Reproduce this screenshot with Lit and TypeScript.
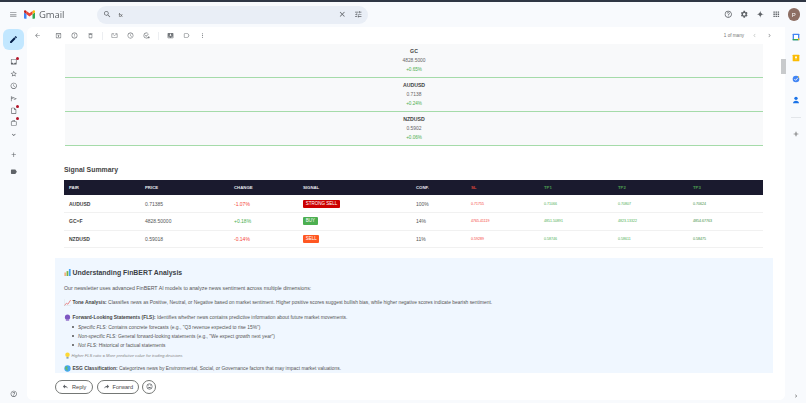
import { LitElement, html, css } from "lit";
import { customElement } from "lit/decorators.js";

const P: Record<string, string> = {
  menu: "M3 18h18v-2H3v2zm0-5h18v-2H3v2zm0-7v2h18V6H3z",
  search: "M15.5 14h-.79l-.28-.27C15.41 12.59 16 11.11 16 9.5 16 5.91 13.09 3 9.5 3S3 5.91 3 9.5 5.91 16 9.5 16c1.61 0 3.09-.59 4.23-1.57l.27.28v.79l5 4.99L20.49 19l-4.99-5zm-6 0C7.01 14 5 11.99 5 9.5S7.01 5 9.5 5 14 7.01 14 9.5 11.99 14 9.5 14z",
  close: "M19 6.41L17.59 5 12 10.59 6.41 5 5 6.41 10.59 12 5 17.59 6.41 19 12 13.41 17.59 19 19 17.59 13.41 12z",
  tune: "M3 17v2h6v-2H3zM3 5v2h10V5H3zm10 16v-2h8v-2h-8v-2h-2v6h2zM7 9v2H3v2h4v2h2V9H7zm14 4v-2H11v2h10zm-6-4h2V7h4V5h-4V3h-2v6z",
  help: "M11 18h2v-2h-2v2zm1-16C6.48 2 2 6.48 2 12s4.48 10 10 10 10-4.48 10-10S17.52 2 12 2zm0 18c-4.41 0-8-3.59-8-8s3.59-8 8-8 8 3.59 8 8-3.59 8-8 8zm0-14c-2.21 0-4 1.79-4 4h2c0-1.1.9-2 2-2s2 .9 2 2c0 2-3 1.75-3 5h2c0-2.25 3-2.5 3-5 0-2.21-1.79-4-4-4z",
  gear: "M19.14 12.94c.04-.3.06-.61.06-.94 0-.32-.02-.64-.07-.94l2.03-1.58c.18-.14.23-.41.12-.61l-1.92-3.32c-.12-.22-.37-.29-.59-.22l-2.39.96c-.5-.38-1.03-.7-1.62-.94l-.36-2.54c-.04-.24-.24-.41-.48-.41h-3.84c-.24 0-.43.17-.47.41l-.36 2.54c-.59.24-1.13.57-1.62.94l-2.39-.96c-.22-.08-.47 0-.59.22L2.74 8.87c-.12.21-.08.47.12.61l2.03 1.58c-.05.3-.09.63-.09.94s.02.64.07.94l-2.03 1.58c-.18.14-.23.41-.12.61l1.92 3.32c.12.22.37.29.59.22l2.39-.96c.5.38 1.03.7 1.62.94l.36 2.54c.05.24.24.41.48.41h3.84c.24 0 .44-.17.47-.41l.36-2.54c.59-.24 1.13-.56 1.62-.94l2.39.96c.22.08.47 0 .59-.22l1.92-3.32c.12-.22.07-.47-.12-.61l-2.01-1.58zM12 15.6c-1.98 0-3.6-1.62-3.6-3.6s1.62-3.6 3.6-3.6 3.6 1.62 3.6 3.6-1.62 3.6-3.6 3.6z",
  spark: "M12 2C12.6 8 16 11.4 22 12 16 12.6 12.6 16 12 22 11.4 16 8 12.6 2 12 8 11.4 11.4 8 12 2z",
  apps: "M4 4h4v4H4zM10 4h4v4h-4zM16 4h4v4h-4zM4 10h4v4H4zM10 10h4v4h-4zM16 10h4v4h-4zM4 16h4v4H4zM10 16h4v4h-4zM16 16h4v4h-4z",
  back: "M20 11H7.83l5.59-5.59L12 4l-8 8 8 8 1.41-1.41L7.83 13H20v-2z",
  archive: "M20.54 5.23l-1.39-1.68C18.88 3.21 18.47 3 18 3H6c-.47 0-.88.21-1.16.55L3.46 5.23C3.17 5.57 3 6.02 3 6.5V19c0 1.1.9 2 2 2h14c1.1 0 2-.9 2-2V6.5c0-.48-.17-.93-.46-1.27zM6.24 5h11.52l.81.97H5.44l.8-.97zM5 19V8h14v11H5zm5.5-2h3v-3H16l-4-4-4 4h2.5z",
  report: "M12 2a10 10 0 100 20 10 10 0 000-20zm0 18a8 8 0 110-16 8 8 0 010 16zM11 7h2v6h-2zm0 8h2v2h-2z",
  del: "M6 19c0 1.1.9 2 2 2h8c1.1 0 2-.9 2-2V7H6v12zM8 9h8v10H8V9zm7.500-5l-1-1h-5l-1 1H5v2h14V4h-3.500z",
  mail: "M20 4h-5v2h5v12H4V6h7V4H4c-1.100 0-2 .9-2 2v12c0 1.100.9 2 2 2h16c1.100 0 2-.9 2-2V6c0-1.100-.9-2-2-2zM4 8l8 5 8-5V6l-8 5-4-2.500z",
  clock: "M11.99 2C6.47 2 2 6.48 2 12s4.47 10 9.99 10C17.52 22 22 17.52 22 12S17.52 2 11.99 2zM12 20c-4.42 0-8-3.58-8-8s3.58-8 8-8 8 3.58 8 8-3.58 8-8 8zm.5-13H11v6l5.25 3.15.75-1.23-4.5-2.67z",
  task: "M12 2a10 10 0 109.500 13h-2.100A8 8 0 1112 4c1.700 0 3.300.5 4.600 1.500L18 4a10 10 0 00-6-2zM8.400 10.600L7 12l4 4 9-9-1.400-1.400L11 13.200zM19 14v3h-3v2h3v3h2v-3h3v-2h-3v-3z",
  move: "M20 3H4c-1.100 0-2 .9-2 2v14c0 1.100.9 2 2 2h16c1.100 0 2-.9 2-2V5c0-1.100-.9-2-2-2zm0 16H4v-3h4c0 1.660 1.800 3 4 3s4-1.340 4-3h4v3zM12 14l-4-4h2.500V6h3v4H16z",
  label: "M17.63 5.84C17.27 5.33 16.67 5 16 5L5 5.01C3.9 5.01 3 5.9 3 7v10c0 1.1.9 1.99 2 1.99L16 19c.67 0 1.27-.33 1.63-.84L22 12l-4.37-6.16zM16 17H5V7h11l3.55 5L16 17z",
  more: "M12 8c1.1 0 2-.9 2-2s-.9-2-2-2-2 .9-2 2 .9 2 2 2zm0 2c-1.1 0-2 .9-2 2s.9 2 2 2 2-.9 2-2-.9-2-2-2zm0 6c-1.1 0-2 .9-2 2s.9 2 2 2 2-.9 2-2-.9-2-2-2z",
  left: "M15.41 7.41L14 6l-6 6 6 6 1.41-1.41L10.83 12z",
  right: "M10 6L8.59 7.41 13.17 12l-4.58 4.59L10 18l6-6z",
  down: "M16.59 8.59L12 13.17 7.41 8.59 6 10l6 6 6-6z",
  inbox: "M19 3H4.99c-1.11 0-1.98.89-1.98 2L3 19c0 1.1.88 2 1.99 2H19c1.1 0 2-.9 2-2V5c0-1.11-.9-2-2-2zm0 12h-4c0 1.66-1.35 3-3 3s-3-1.34-3-3H4.99V5H19v10z",
  star: "M22 9.24l-7.19-.62L12 2 9.19 8.63 2 9.24l5.46 4.73L5.82 21 12 17.27 18.18 21l-1.63-7.03L22 9.24zM12 15.4l-3.76 2.27 1-4.28-3.32-2.88 4.38-.38L12 6.1l1.71 4.04 4.38.38-3.32 2.88 1 4.28L12 15.4z",
  send: "M3 4v16h2v-7h6l-1-2H5V7.200L18 12l-6 2.200v2.100L22 12 3 4z",
  draft: "M14 2H6c-1.1 0-2 .9-2 2v16c0 1.1.9 2 2 2h12c1.1 0 2-.9 2-2V8l-6-6zM6 20V4h7v5h5v11H6z",
  bag: "M19 7h-3V5c0-1.100-.9-2-2-2h-4c-1.100 0-2 .9-2 2v2H5c-1.100 0-2 .9-2 2v10c0 1.100.9 2 2 2h14c1.100 0 2-.9 2-2V9c0-1.100-.9-2-2-2zM10 5h4v2h-4V5zm9 14H5V9h14v10z",
  plus: "M19 13h-6v6h-2v-6H5v-2h6V5h2v6h6v2z",
  labelFill: "M17.63 5.84C17.27 5.33 16.67 5 16 5L5 5.01C3.9 5.01 3 5.9 3 7v10c0 1.1.9 1.99 2 1.99L16 19c.67 0 1.27-.33 1.63-.84L22 12l-4.37-6.16z",
  pencil: "M3 17.25V21h3.75L17.81 9.94l-3.75-3.75L3 17.25zM20.71 7.04a1 1 0 000-1.41l-2.34-2.34a1 1 0 00-1.41 0l-1.83 1.83 3.75 3.75 1.83-1.83z",
  reply: "M10 9V5l-7 7 7 7v-4.100c5 0 8.500 1.600 11 5.100-1-5-4-10-11-11z",
  forward: "M14 9V5l7 7-7 7v-4.100c-5 0-8.500 1.600-11 5.100 1-5 4-10 11-11z",
  smile: "M12 2a10 10 0 100 20 10 10 0 000-20zm0 18a8 8 0 110-16 8 8 0 010 16zM8.500 11a1.500 1.500 0 100-3 1.500 1.500 0 000 3zm7 0a1.500 1.500 0 100-3 1.500 1.500 0 000 3zM12 17.500c2.300 0 4.300-1.500 5.100-3.500H6.900c.8 2 2.800 3.500 5.100 3.500z",
};

const icon = (name: string, cls = "") => html`<svg class="ic ${cls}" viewBox="0 0 24 24" aria-hidden="true"><path d=${P[name]}></path></svg>`;

const quotes = [
  { s: "GC", p: "4828.5000", c: "+0.65%" },
  { s: "AUDUSD", p: "0.7138", c: "+0.24%" },
  { s: "NZDUSD", p: "0.5902", c: "+0.06%" },
];
const rows = [
  { pair: "AUDUSD", price: "0.71385", ch: "-1.07%", up: false, sig: "STRONG SELL", k: "ss", conf: "100%", sl: "0.71755", t1: "0.71066", t2: "0.70807", t3: "0.70624" },
  { pair: "GC=F", price: "4828.50000", ch: "+0.18%", up: true, sig: "BUY", k: "buy", conf: "14%", sl: "4765.41119", t1: "4851.50891", t2: "4823.13322", t3: "4854.67763" },
  { pair: "NZDUSD", price: "0.59018", ch: "-0.14%", up: false, sig: "SELL", k: "sell", conf: "11%", sl: "0.59289", t1: "0.58746", t2: "0.58611", t3: "0.58475" },
];

@customElement("app-root")
export class AppRoot extends LitElement {
  static styles = css`
    :host { display: block; width: 806px; height: 403px; overflow: hidden; background: #f8fafd; font-family: "Liberation Sans", Arial, sans-serif; color: #444; }
    * { box-sizing: border-box; }
    .shell { height: 403px; display: flex; flex-direction: column; border-top: 2px solid #2f3644; filter: blur(0.3px); }
    .ic { width: 8px; height: 8px; fill: #5f6368; display: block; flex: none; }
    .cell { display: flex; align-items: center; justify-content: center; flex: none; width: 16px; height: 16px; position: relative; }

    .top { height: 25px; flex: none; display: flex; align-items: center; padding-left: 5px; }
    .top .cell .ic { width: 8.5px; height: 8.5px; }
    .logo { margin-left: 3px; display: flex; align-items: center; gap: 4px; width: 73px; flex: none; }
    .logo svg { width: 11px; height: 9px; display: block; }
    .logo span { font: 9.5px "Open Sans", sans-serif; color: #5f6368; letter-spacing: -0.1px; }
    .search { width: 271px; height: 18px; flex: none; border-radius: 9px; background: #e9eef6; display: flex; align-items: center; padding: 0 2px 0 2.5px; }
    .search .q { flex: 1; margin-left: 3px; font-size: 5.4px; color: #444; }
    .topright { margin-left: auto; display: flex; align-items: center; padding-right: 6px; }
    .avatar { width: 12.5px; height: 12.5px; border-radius: 50%; background: #8d6e63; color: #fff; font-size: 6px; display: flex; align-items: center; justify-content: center; margin-left: 3px; }

    .body { flex: 1; min-height: 0; display: flex; }
    .rail { width: 27px; flex: none; display: flex; flex-direction: column; align-items: center; padding-top: 2px; }
    .compose { width: 21px; height: 21px; border-radius: 6px; background: #c2e7ff; display: flex; align-items: center; justify-content: center; margin-bottom: 6px; }
    .compose .ic { fill: #041e49; width: 9px; height: 9px; }
    .rail .cell { height: 12.1px; }
    .rail .cell .ic { width: 7.5px; height: 7.5px; }
    .dot { position: absolute; top: 0.5px; left: 10.5px; width: 3px; height: 3px; border-radius: 50%; background: #b3152a; }
    .rail .spacer { height: 8px; }
    .rail .gapbot { margin-top: 5px; }
    .rail .helpb { margin-top: auto; margin-bottom: 3px; }

    .main { width: 758px; flex: none; background: #fff; border-radius: 6px 0 6px 6px; display: flex; flex-direction: column; position: relative; min-height: 0; margin-bottom: 3px; }
    .tool { height: 17px; flex: none; display: flex; align-items: center; padding-left: 2px; }
    .tool .ic { width: 7px; height: 7px; fill: #74787c; }
    .sep { width: 1px; height: 8px; background: #eceef1; flex: none; margin: 0 3.5px; }
    .b5 { margin-left: 5px; }
    .pager { margin-left: auto; display: flex; align-items: center; font-size: 4.6px; color: #747775; padding-right: 8px; }
    .pager span { margin-right: 3px; }
    .tool .pager .ic { fill: #8a8d90; }
    .pager .cell { width: 15px; }
    .tool .pager .ic.dim { fill: #c4c7c5; }

    .scroll { flex: 1; min-height: 0; overflow: hidden; padding: 0 12px 0 28px; }
    .quote { margin: 0 10px; height: 34px; background: #f8f9fa; border-bottom: 1px solid #a5dba9; text-align: center; display: flex; flex-direction: column; align-items: center; padding-top: 3px; }
    .quote b { font-size: 5.2px; line-height: 9px; color: #444; }
    .quote i { font-style: normal; font-size: 4.9px; line-height: 10px; color: #666; }
    .quote em { font-style: normal; font-size: 4.6px; line-height: 8px; color: #4caf50; }
    h3 { margin: 19px 0 0 9px; font-size: 6.9px; line-height: 10px; color: #444; font-weight: 700; }
    table { margin: 5px 10px 0 9px; width: 699px; border-collapse: collapse; table-layout: fixed; }
    th { background: #1a1a2e; color: #e8e8ee; font-size: 4.3px; font-weight: 700; text-align: left; height: 15px; padding: 0 0 0 5px; }
    th.r { color: #d9453a; }
    th.g { color: #4a9c50; }
    td { height: 17.5px; font-size: 5px; color: #555; padding: 0 0 0 5px; border-bottom: 1px solid #f1f1f1; }
    td.pair { font-weight: 700; color: #444; }
    td.up { color: #4caf50; }
    td.dn { color: #f44336; }
    td.lv { font-size: 3.6px; }
    td.r { color: #f44336; }
    td.g { color: #4caf50; }
    td.g3 { color: #388e3c; }
    .tag { display: inline-block; font-size: 4.5px; line-height: 8px; padding: 0 2.7px; border-radius: 1px; color: #fff; vertical-align: middle; }
    .tag.ss { background: #cc0000; }
    .tag.buy { background: #4caf50; }
    .tag.sell { background: #ff5722; }

    .info { margin-top: 9.5px; background: #f0f7ff; padding: 10px 9px 24px 9px; color: #555; font-size: 4.9px; }
    .info h2 { margin: 0; font-size: 6.9px; line-height: 10px; font-weight: 700; color: #3b3f46; display: flex; align-items: center; }
    .em { width: 7px; height: 7px; flex: none; display: inline-block; vertical-align: top; margin-right: 1.5px; }
    .info p { margin: 0; line-height: 7px; }
    .info .intro { margin-top: 7px; font-size: 5.25px; }
    .info .p2 { margin-top: 7.5px; }
    .info .esg { margin-top: 6.5px; }
    .info b { color: #444; }
    .info ul { margin: 2px 0 0 0; padding: 0 0 0 14px; line-height: 9.1px; list-style: none; }
    .info li { position: relative; }
    .info li::before { content: ""; position: absolute; left: -6px; top: 3.6px; width: 1.8px; height: 1.8px; border-radius: 50%; background: #555; }
    .info .note { margin-top: 2px; font-size: 4.1px; font-style: italic; color: #888; line-height: 7px; }
    .note .em { margin-right: 0.5px; }

    .replybar { height: 27px; flex: none; background: #fff; border-radius: 0 0 6px 6px; display: flex; align-items: center; padding: 0 0 0 28px; gap: 4px; }
    .btn { height: 14px; border: 1px solid #747775; border-radius: 7px; display: flex; align-items: center; font-size: 5.6px; color: #444; gap: 3px; padding-left: 6px; }
    .btn .ic { width: 7px; height: 7px; }
    .btn.re { width: 38px; }
    .btn.fw { width: 42px; padding-left: 5px; gap: 2.5px; }
    .btn.sm { width: 14px; padding: 0; justify-content: center; border-radius: 50%; margin-left: -1px; }
    .thumb { position: absolute; left: 754px; top: 32px; width: 4.5px; height: 15px; background: #c8cacc; }

    .side { flex: 1; display: flex; flex-direction: column; align-items: center; padding-top: 6px; }
    .side svg.a { width: 8px; height: 8px; display: block; margin-bottom: 13px; }
    .side hr { width: 10px; border: 0; border-top: 1px solid #e3e6ea; margin: 0 0 12px; }
    .side .ic { width: 8px; height: 8px; fill: #444; }
    .side .ic.tail { margin-top: auto; margin-bottom: 4px; width: 6px; height: 6px; }
  `;

  render() {
    return html`<div class="shell">
      <header class="top">
        <div class="cell">${icon("menu")}</div>
        <div class="logo">
          <svg viewBox="0 0 22 17" aria-hidden="true">
            <path d="M1.500 17H5V8L0 4v11.500C0 16.300.7 17 1.500 17z" fill="#4285f4"></path>
            <path d="M17 17h3.500c.8 0 1.500-.7 1.500-1.500V4l-5 4z" fill="#34a853"></path>
            <path d="M17 1.500V8l5-4V2.200C22 .3 19.900-.6 18.500.5z" fill="#fbbc04"></path>
            <path d="M5 8V1.500l6 4.500 6-4.500V8l-6 4.500z" fill="#ea4335"></path>
            <path d="M0 2.200V4l5 4V1.500L3.500.5C2.100-.6 0 .3 0 2.200z" fill="#c5221f"></path>
          </svg>
          <span>Gmail</span>
        </div>
        <div class="search">
          <div class="cell">${icon("search")}</div>
          <div class="q">fx</div>
          <div class="cell">${icon("close")}</div>
          <div class="cell">${icon("tune")}</div>
        </div>
        <div class="topright">
          <div class="cell">${icon("help")}</div>
          <div class="cell">${icon("gear")}</div>
          <div class="cell">${icon("spark")}</div>
          <div class="cell">${icon("apps")}</div>
          <div class="avatar">P</div>
        </div>
      </header>
      <div class="body">
        <nav class="rail">
          <div class="compose">${icon("pencil")}</div>
          <div class="cell">${icon("inbox")}<span class="dot"></span></div>
          <div class="cell">${icon("star")}</div>
          <div class="cell">${icon("clock")}</div>
          <div class="cell">${icon("send")}</div>
          <div class="cell">${icon("draft")}<span class="dot"></span></div>
          <div class="cell">${icon("bag")}<span class="dot"></span></div>
          <div class="cell">${icon("down")}</div>
          <div class="spacer"></div>
          <div class="cell">${icon("plus")}</div>
          <div class="cell gapbot">${icon("labelFill")}</div>
          <div class="cell helpb">${icon("help")}</div>
        </nav>
        <main class="main">
          <div class="tool">
            <div class="cell">${icon("back")}</div>
            <div class="cell b5">${icon("archive")}</div>
            <div class="cell">${icon("report")}</div>
            <div class="cell">${icon("del")}</div>
            <div class="sep"></div>
            <div class="cell">${icon("mail")}</div>
            <div class="cell">${icon("clock")}</div>
            <div class="cell">${icon("task")}</div>
            <div class="sep"></div>
            <div class="cell">${icon("move")}</div>
            <div class="cell">${icon("label")}</div>
            <div class="cell">${icon("more")}</div>
            <div class="pager">
              <span>1 of many</span>
              <div class="cell">${icon("left", "dim")}</div>
              <div class="cell">${icon("right")}</div>
            </div>
          </div>
          <div class="scroll">
            ${quotes.map((q) => html`<div class="quote"><b>${q.s}</b><i>${q.p}</i><em>${q.c}</em></div>`)}
            <h3>Signal Summary</h3>
            <table>
              <colgroup>
                ${[76, 89, 69, 113, 55, 73, 74, 75, 75].map((w) => html`<col style="width:${w}px" />`)}
              </colgroup>
              <thead>
                <tr>
                  <th>PAIR</th><th>PRICE</th><th>CHANGE</th><th>SIGNAL</th><th>CONF.</th>
                  <th class="r">SL</th><th class="g">TP1</th><th class="g">TP2</th><th class="g">TP3</th>
                </tr>
              </thead>
              <tbody>
                ${rows.map((r) => html`<tr>
                  <td class="pair">${r.pair}</td>
                  <td>${r.price}</td>
                  <td class=${r.up ? "up" : "dn"}>${r.ch}</td>
                  <td><span class="tag ${r.k}">${r.sig}</span></td>
                  <td>${r.conf}</td>
                  <td class="lv r">${r.sl}</td>
                  <td class="lv g">${r.t1}</td>
                  <td class="lv g">${r.t2}</td>
                  <td class="lv g3">${r.t3}</td>
                </tr>`)}
              </tbody>
            </table>
            <section class="info">
              <h2>
                <svg class="em" viewBox="0 0 10 10" aria-hidden="true"><rect x="0.500" y="5" width="2.500" height="5" fill="#f4b183"></rect><rect x="3.700" y="3" width="2.500" height="7" fill="#7cb342"></rect><rect x="7" y="0" width="2.500" height="10" fill="#42a5f5"></rect></svg>
                Understanding FinBERT Analysis
              </h2>
              <p class="intro">Our newsletter uses advanced FinBERT AI models to analyze news sentiment across multiple dimensions:</p>
              <p class="p2">
                <svg class="em" viewBox="0 0 10 10" aria-hidden="true"><path d="M0.500 9.500L3.500 6 5.500 7.500 9.500 1.500" fill="none" stroke="#e57373" stroke-width="1.200"></path><path d="M.5.5v9h9" fill="none" stroke="#cfd8dc" stroke-width=".6"></path></svg><b>Tone Analysis:</b> Classifies news as Positive, Neutral, or Negative based on market sentiment. Higher positive scores suggest bullish bias, while higher negative scores indicate bearish sentiment.
              </p>
              <p class="p2">
                <svg class="em" viewBox="0 0 10 10" aria-hidden="true"><circle cx="5" cy="4.500" r="3.700" fill="#7e57c2"></circle><rect x="2.500" y="8" width="5" height="1.500" rx=".6" fill="#9575cd"></rect></svg><b>Forward-Looking Statements (FLS):</b> Identifies whether news contains predictive information about future market movements.
              </p>
              <ul>
                <li><i>Specific FLS:</i> Contains concrete forecasts (e.g., "Q3 revenue expected to rise 15%")</li>
                <li><i>Non-specific FLS:</i> General forward-looking statements (e.g., "We expect growth next year")</li>
                <li><i>Not FLS:</i> Historical or factual statements</li>
              </ul>
              <p class="note">
                <svg class="em" viewBox="0 0 10 10" aria-hidden="true"><circle cx="5" cy="4" r="3.200" fill="#fdd835"></circle><rect x="3.500" y="7" width="3" height="2.500" fill="#90a4ae"></rect></svg>Higher FLS ratio = More predictive value for trading decisions
              </p>
              <p class="esg">
                <svg class="em" viewBox="0 0 10 10" aria-hidden="true"><circle cx="5" cy="5" r="4.500" fill="#42a5f5"></circle><path d="M2 3l2-1.500 1.500 1.500-1 2 1 1.500-1 2.500L3 6.500 1.500 5z" fill="#66bb6a"></path></svg><b>ESG Classification:</b> Categorizes news by Environmental, Social, or Governance factors that may impact market valuations.
              </p>
            </section>
          </div>
          <div class="replybar">
            <div class="btn re">${icon("reply")}<span>Reply</span></div>
            <div class="btn fw">${icon("forward")}<span>Forward</span></div>
            <div class="btn sm">${icon("smile")}</div>
          </div>
          <div class="thumb"></div>
        </main>
        <aside class="side">
          <svg class="a" viewBox="0 0 24 24" aria-hidden="true"><rect x="2" y="2" width="20" height="20" rx="2" fill="#4285f4"></rect><rect x="6" y="6" width="12" height="12" fill="#fff"></rect><path d="M18 16h4v4a2 2 0 01-2 2h-2z" fill="#fbbc04"></path><rect x="2" y="18" width="16" height="4" fill="#34a853"></rect></svg>
          <svg class="a" viewBox="0 0 24 24" aria-hidden="true"><rect x="2" y="2" width="20" height="20" rx="2" fill="#fbbc04"></rect><path d="M9 10a3 3 0 116 0c0 1.500-1 2-1 3h-4c0-1-1-1.500-1-3zM10 14h4v2h-4z" fill="#fff"></path></svg>
          <svg class="a" viewBox="0 0 24 24" aria-hidden="true"><circle cx="12" cy="12" r="10" fill="#4285f4"></circle><path d="M7 12l4 4 7-8" fill="none" stroke="#fff" stroke-width="2.500"></path><path d="M18 3l4 3-3 3z" fill="#fbbc04"></path></svg>
          <svg class="a" viewBox="0 0 24 24" aria-hidden="true"><circle cx="12" cy="7" r="5" fill="#1a73e8"></circle><path d="M3 22c0-5 4-8 9-8s9 3 9 8z" fill="#1a73e8"></path></svg>
          <hr />
          ${icon("plus")}
          ${icon("right", "tail")}
        </aside>
      </div>
    </div>`;
  }
}
